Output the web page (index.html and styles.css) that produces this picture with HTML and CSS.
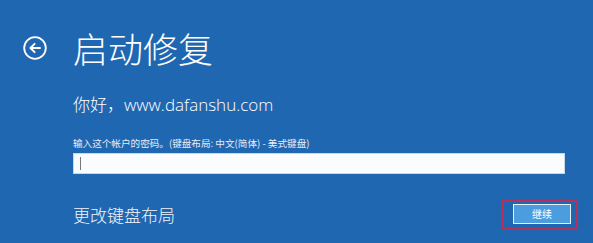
FILE: index.html
```html
<!DOCTYPE html>
<html lang="zh-CN">
<head>
<meta charset="utf-8">
<title>启动修复</title>
<link rel="stylesheet" href="styles.css">
</head>
<body>
<div class="screen">
  <header class="header">
    <span class="back">
      <svg width="24" height="24" viewBox="0 0 24 24" aria-hidden="true">
        <circle cx="12" cy="12" r="10.8" fill="none" stroke="#fff" stroke-width="1.8"/>
        <path d="M17 12H7.6M11.6 7.8L7.4 12l4.2 4.2" fill="none" stroke="#fff" stroke-width="1.9" stroke-linecap="round" stroke-linejoin="round"/>
      </svg>
    </span>
    <h1 class="title">启动修复</h1>
  </header>
  <main class="content">
    <p class="greeting">你好，www.dafanshu.com</p>
    <p class="label">输入这个帐户的密码。(键盘布局: 中文(简体) - 美式键盘)</p>
    <div class="input"><span class="caret"></span></div>
    <div class="footer">
      <span class="change">更改键盘布局</span>
      <span class="highlight"><span class="button">继续</span></span>
    </div>
  </main>
</div>
</body>
</html>
```

FILE: styles.css
```css
html, body {
  margin: 0;
  padding: 0;
  background: #2067b2;
}
body {
  width: 593px;
  height: 243px;
  overflow: hidden;
  color: #fff;
  font-family: "Open Sans", "Noto Sans CJK SC", sans-serif;
}
.screen {
  display: flex;
  flex-direction: column;
}
.header {
  display: flex;
  align-items: center;
  height: 44px;
  padding-top: 26px;
  padding-left: 23px;
}
.back {
  display: flex;
  width: 24px;
  height: 24px;
  margin-right: 26px;
}
.title {
  margin: 0;
  font-family: "Noto Sans CJK SC", sans-serif;
  font-weight: 300;
  font-size: 35px;
  line-height: 44px;
  letter-spacing: 0;
}
.content {
  display: flex;
  flex-direction: column;
  padding-left: 73px;
  padding-right: 28px;
}
.greeting {
  margin: 24px 0 0;
  font-size: 17px;
  line-height: 22px;
  font-weight: 300;
}
.label {
  margin: 21px 0 0;
  font-family: "Noto Sans CJK SC", sans-serif;
  font-size: 9.6px;
  line-height: 13px;
  color: #e8eef7;
}
.input {
  margin-top: 3px;
  height: 19px;
  width: 484px;
  background: #fbfcfd;
  border: 1px solid #c9d6e6;
  display: flex;
  align-items: center;
  padding-left: 6px;
  box-sizing: content-box;
}
.caret {
  width: 1px;
  height: 13px;
  background: #777;
}
.footer {
  display: flex;
  justify-content: space-between;
  align-items: center;
  margin-top: 26px;
}
.change {
  font-family: "Noto Sans CJK SC", sans-serif;
  font-size: 17px;
  line-height: 20px;
  font-weight: 300;
  color: #f2f5fa;
}
.highlight {
  display: flex;
  border: 2px solid #b6305c;
  padding: 2px 5px 4px 9px;
  margin-right: -13px;
}
.button {
  width: 56px;
  height: 18px;
  border: 1px solid #e6f1fb;
  background: #4b9de0;
  color: #fff;
  font-family: "Noto Sans CJK SC", sans-serif;
  font-size: 10px;
  line-height: 18px;
  text-align: center;
}
```
